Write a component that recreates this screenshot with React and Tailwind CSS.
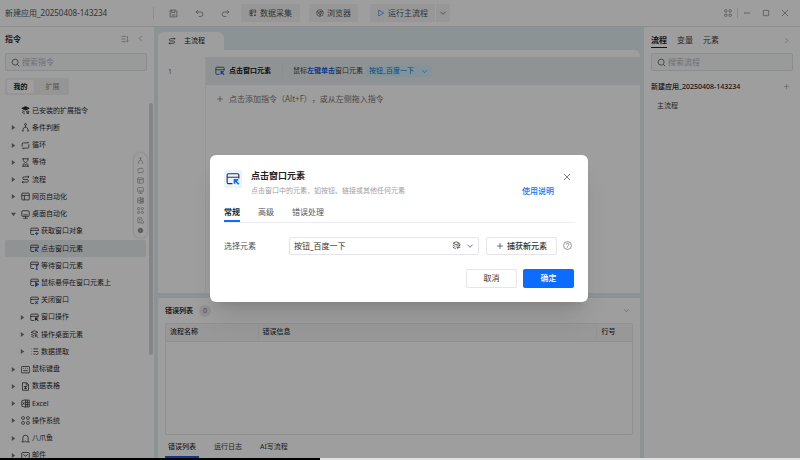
import React, { useState } from 'react';

const paths = {
  save: <><path d="M3 3h15l3 3v15H3z" /><path d="M7 3v6h9V3M7 16h10" /></>,
  undo: <path d="M8 3 3 8l5 5M3 8h12a6 6 0 0 1 0 12h-5" />,
  redo: <path d="m16 3 5 5-5 5M21 8H9a6 6 0 0 0 0 12h5" />,
  collect: <><path d="M12 20H3V3h17v9M3 9h17M3 14h9M8 3v17" /><path d="M18 14v7m-3-3 3 3 3-3" /></>,
  browser: <><circle cx="12" cy="12" r="10" /><circle cx="12" cy="12" r="4" /><path d="M12 8h9M8.5 14 4 6M15.5 14 11 22" /></>,
  play: <path d="M5 3v18l15-9z" />,
  down: <path d="m4 8 8 8 8-8" />,
  left: <path d="m15 4-7 8 7 8" />,
  right: <path d="m9 4 7 8-7 8" />,
  close: <path d="m3 3 18 18M21 3 3 21" />,
  minus: <path d="M3 12h18" />,
  square: <rect x="4" y="4" width="16" height="16" rx="2" />,
  plus: <path d="M12 3v18M3 12h18" />,
  sort: <path d="M2 4h12M2 12h10M2 20h12M19 3v17m-3-3 3 3 3-3" />,
  search: <><circle cx="11" cy="11" r="8" /><path d="m17 17 5 5" /></>,
  grid: (
    <>
      <rect x="2" y="2" width="7" height="7" rx="2" />
      <rect x="15" y="2" width="7" height="7" rx="2" />
      <rect x="2" y="15" width="7" height="7" rx="2" />
      <rect x="15" y="15" width="7" height="7" rx="2" />
    </>
  ),
  installed: (
    <>
      <path d="M12 1 2 6l10 5 10-5z" fill="currentColor" />
      <path d="M3 12l7 4M3 17l7 4M15 14h6v3h-6zM15 20h6" />
    </>
  ),
  branch: (
    <>
      <circle cx="12" cy="4" r="2.5" />
      <path d="M12 7v5M12 11c-5 1-7 4-7 8M12 11c5 1 7 4 7 8M2 21h6M16 21h6" />
    </>
  ),
  loop: <path d="M3 15V8a3 3 0 0 1 3-3h14l-3-3M21 9v7a3 3 0 0 1-3 3H4l3 3" />,
  wait: <path d="M3 2h18M3 22h18M6 2v5l5 5-5 5v5M18 2v5l-5 5 5 5v5M9 18h6" />,
  flow: <path d="M21 5H8a3.5 3.5 0 0 0 0 7h8a3.5 3.5 0 0 1 0 7H3M18 2l3 3-3 3M6 16l-3 3 3 3" />,
  web: <><rect x="2" y="3" width="20" height="18" rx="2" /><path d="M2 9h20M9 9v12" /></>,
  desktop: <><rect x="2" y="2" width="20" height="15" rx="3" /><path d="M12 17v4M6 22h12M6 13h12" /></>,
  keyboard: <><rect x="1" y="4" width="22" height="17" rx="2" /><path d="M6 9h2M11 9h2M16 9h2M6 15h12" /></>,
  sheet: <><path d="M4 2h11l5 5v15H4zM14 2v6h6" /><path d="M8 12h8M8 17h8M12 12v7" /></>,
  excel: <><path d="M12 3h10v18H12M12 9h10M12 15h10M17 3v18" /><path d="M2 5l10-3v20L2 19zM5 9l4 6M9 9l-4 6" /></>,
  bell: <path d="M5 18V10a7 7 0 0 1 14 0v8l3 3h-7l-3-2-3 2H2z" />,
  mail: <><rect x="2" y="4" width="20" height="17" rx="2" /><path d="m6 9 6 5 6-5" /></>,
  layers: (
    <>
      <path d="M12 2 3 6l9 4 9-4zM3 11l7 4M3 16l7 4" />
      <path d="m14 13 8 8M14 19v-6h6" />
    </>
  ),
  extract: <path d="M9 5h13M9 12h13M9 19h5M3 5h1M3 12h1M3 19h1M15 18l3 3 5-6" />,
  shape: <><path d="M10 20H3V3h14v6M7 8h6M7 13h3" /><path d="M13 15l5-4 4 4v6h-9z" /></>,
  library: <><path d="M11 2 3 6l8 4 9-4zM2 11l7 4M2 16l8 5" /><path d="M12 13h9l-3-3M22 17h-9l3 4M21 8v4" /></>,
  help: <><circle cx="12" cy="12" r="10.5" /><path d="M8.5 9.5a3.5 3.5 0 1 1 5 3c-1 .5-1.5 1-1.5 2.5M12 17v1.5" /></>,
  dot: <><circle cx="12" cy="12" r="8" fill="currentColor" /><circle cx="12" cy="12" r="2" stroke="#ddd" /></>,
};

// small blue mark in the lower right corner of the window icon
const marks = {
  add: <path d="M18 13v9M13.5 17.5h9" />,
  click: <path d="m15 14 7 7M14.5 20v-6.5H21" />,
  wait: <path d="M15 12h6M15 22h6M18 12v10" />,
  hover: <path d="M15 12v10l7-5z" fill="currentColor" />,
  close: <path d="m14 14 7 7M21 14l-7 7" />,
};

function Icon({ name, className = 'size-2' }) {
  return (
    <svg viewBox="0 0 24 24" fill="none" stroke="currentColor" strokeWidth="2" className={`shrink-0 ${className}`}>
      {paths[name]}
    </svg>
  );
}

function WindowIcon({ mark, dark, className = 'size-[9px]' }) {
  return (
    <svg viewBox="0 0 24 24" fill="none" stroke="currentColor" strokeWidth="2" className={`shrink-0 ${className}`}>
      <path d="M11 20H4a2 2 0 0 1-2-2V5a2 2 0 0 1 2-2h16a2 2 0 0 1 2 2v6M2 9h20" />
      <g className={dark ? '' : 'text-[#0b6cff]'} stroke="currentColor" strokeWidth="2.8">{marks[mark]}</g>
    </svg>
  );
}

const tree = [
  { label: '已安装的扩展指令', icon: 'installed' },
  { label: '条件判断', icon: 'branch', caret: true },
  { label: '循环', icon: 'loop', caret: true },
  { label: '等待', icon: 'wait', caret: true },
  { label: '流程', icon: 'flow', caret: true },
  { label: '网页自动化', icon: 'web', caret: true },
  { label: '桌面自动化', icon: 'desktop', caret: true, open: true },
  { label: '获取窗口对象', mark: 'add', child: true },
  { label: '点击窗口元素', mark: 'click', child: true, active: true },
  { label: '等待窗口元素', mark: 'wait', child: true },
  { label: '鼠标悬停在窗口元素上', mark: 'hover', child: true },
  { label: '关闭窗口', mark: 'close', child: true },
  { label: '窗口操作', mark: 'click', dark: true, child: true, caret: true },
  { label: '操作桌面元素', icon: 'layers', child: true, caret: true },
  { label: '数据提取', icon: 'extract', child: true, caret: true },
  { label: '鼠标键盘', icon: 'keyboard', caret: true },
  { label: '数据表格', icon: 'sheet', caret: true },
  { label: 'Excel', icon: 'excel', caret: true },
  { label: '操作系统', icon: 'grid', caret: true },
  { label: '八爪鱼', icon: 'bell', caret: true },
  { label: '邮件', icon: 'mail', caret: true },
];

const shortcuts = ['branch', 'loop', 'web', 'desktop', 'excel', 'grid', 'shape', 'dot'];

function TopBar() {
  return (
    <header className="flex h-[27px] shrink-0 items-center border-b border-[#e4e4e6] text-[#555]">
      <div className="w-[154px] shrink-0 border-r border-[#e4e4e6] pl-[5px]">新建应用_20250408-143234</div>
      <div className="flex items-center gap-[17px] pr-[11px] pl-[15px] text-[#777]">
        <button aria-label="保存"><Icon name="save" className="size-[9px]" /></button>
        <button aria-label="撤销"><Icon name="undo" className="size-[9px]" /></button>
        <button aria-label="重做"><Icon name="redo" className="size-[9px]" /></button>
      </div>
      <div className="flex h-[18px] gap-[9px]">
        <button className="flex items-center gap-[3px] rounded-xs bg-[#f4f4f5] px-2"><Icon name="collect" />数据采集</button>
        <button className="flex items-center gap-[3px] rounded-xs bg-[#f4f4f5] px-[7px]"><Icon name="browser" />浏览器</button>
        <div className="ml-[3px] flex gap-px">
          <button className="flex items-center gap-[3px] rounded-l-xs bg-[#f4f4f5] px-[7px]">
            <Icon name="play" className="size-2 text-[#2b7de9]" />运行主流程
          </button>
          <button aria-label="更多运行方式" className="rounded-r-xs bg-[#f4f4f5] px-[3px]"><Icon name="down" /></button>
        </div>
      </div>
      <div className="ml-auto flex items-center gap-[11px] pr-[11px] text-[#777]">
        <button aria-label="应用" className="-mr-[6px]"><Icon name="grid" /></button>
        <span className="-mr-[6px] h-[10px] w-px bg-[#ddd]" />
        <button aria-label="最小化"><Icon name="minus" /></button>
        <button aria-label="最大化"><Icon name="square" /></button>
        <button aria-label="关闭"><Icon name="close" /></button>
      </div>
    </header>
  );
}

function SearchBox({ placeholder }) {
  return (
    <label className="flex h-[18px] items-center gap-[2px] rounded-xs border border-[#e2e4e6] bg-[#f7f8f8] px-[5px] text-[#555]">
      <Icon name="search" className="size-[9px]" />
      <input aria-label={placeholder} placeholder={placeholder} className="min-w-0 flex-1 outline-none placeholder:text-[#b5b5b8]" />
    </label>
  );
}

function Sidebar() {
  return (
    <aside className="relative w-[154px] shrink-0 overflow-hidden bg-white">
      <div className="flex h-[26px] items-center gap-2 px-[5px] pb-[3px]">
        <h2 className="mr-auto font-bold text-[#333]">指令</h2>
        <button aria-label="排序" className="text-[#888]"><Icon name="sort" /></button>
        <button aria-label="收起" className="mr-[5px] text-[#888]"><Icon name="left" className="size-[7px]" /></button>
      </div>
      <div className="pr-[7px] pl-[5px]">
        <SearchBox placeholder="搜索指令" />
        <div className="mt-[7px] flex h-[17px] w-[64px] rounded-xs bg-[#f1f1f2] p-[2px] text-[7px]">
          <button className="w-[27px] rounded-xs bg-white font-bold text-[#222]">我的</button>
          <button className="flex-1 pl-[4px] text-[#888]">扩展</button>
        </div>
      </div>
      <ul className="mt-[7px] grid h-[362px] auto-rows-fr pr-2 pl-[5px] text-[7px] text-[#2c2c2e]">
        {tree.map((item) => (
          <li
            key={item.label}
            className={`flex items-center ${item.child ? 'pl-[15px]' : 'pl-[6px]'} ${item.active ? 'rounded-xs bg-[#e8eeef]' : ''}`}
          >
            <span className="w-[10px] shrink-0">
              {item.caret && (
                <svg viewBox="0 0 6 6" className={`size-[5px] text-[#777] ${item.open ? 'rotate-90' : ''}`}>
                  <path d="M1 0v6l4-3z" fill="currentColor" />
                </svg>
              )}
            </span>
            {item.icon
              ? <Icon name={item.icon} className="size-[9px]" />
              : <WindowIcon mark={item.mark} dark={item.dark} />}
            <span className="ml-[2px] whitespace-nowrap">{item.label}</span>
          </li>
        ))}
      </ul>
      <div className="absolute top-[126px] right-[7px] flex w-[13px] flex-col items-center gap-[3px] rounded-full bg-white py-[4px] text-[#888] shadow-[0_0_3px_#ccc]">
        {shortcuts.map((name) => (
          <button key={name} aria-label={name}><Icon name={name} className="size-[7px]" /></button>
        ))}
      </div>
      <div className="absolute top-[76px] right-px h-[252px] w-[4px] rounded-full bg-[#d3d7da]" />
    </aside>
  );
}

function Editor() {
  return (
    <section className="flex h-[266px] shrink-0 flex-col">
      <div className="mt-[5px] flex h-[18px] w-[66px] items-center gap-2 rounded-t-md bg-white px-[10px] text-[7px] text-[#222]">
        <Icon name="flow" />主流程
      </div>
      <div className="flex flex-1 rounded-tr-md bg-white pt-[7px]">
        <div className="w-[48px] shrink-0 border-r border-[#f2f2f2] pt-[9px] pl-[10px] text-[7px] text-[#777]">1</div>
        <div className="min-w-0 flex-1">
          <div className="flex h-[28px] items-center bg-[#e9eeef] pl-[9px] text-[7px] text-[#444]">
            <WindowIcon mark="click" className="size-[10px]" />
            <b className="ml-[4px] w-[54px] border-r border-[#e2e6e7] text-[#111]">点击窗口元素</b>
            <span className="ml-[10px]">
              鼠标<a href="#click" className="font-bold text-[#0b5fe0]">左键单击</a>窗口元素
            </span>
            <button className="ml-[2px] flex h-[12px] items-center gap-[7px] rounded-xs bg-[#d6edf8] px-[4px] text-[#0878c8]">
              按钮_百度一下<Icon name="down" className="size-[7px]" />
            </button>
          </div>
          <button className="flex h-[28px] items-center gap-[5px] pl-[10px] text-[#777] [text-spacing-trim:space-all]">
            <Icon name="plus" />点击添加指令（Alt+F），或从左侧拖入指令
          </button>
        </div>
      </div>
    </section>
  );
}

function ErrorPanel() {
  return (
    <section className="mt-[5px] flex min-h-0 flex-1 flex-col bg-white px-[7px] pb-[2px] text-[7px] text-[#333]">
      <div className="flex h-[25px] items-center">
        <h2 className="font-bold">错误列表</h2>
        <span className="ml-[6px] flex size-[12px] items-center justify-center rounded-full bg-[#ebebec] text-[#777]">0</span>
        <button aria-label="收起" className="mr-[3px] ml-auto text-[#888]"><Icon name="down" className="size-[7px]" /></button>
      </div>
      <div className="min-h-0 flex-1 rounded-xs border border-[#eaebec]">
        <table className="w-full table-fixed text-left">
          <thead>
            <tr className="h-[17px] border-b border-[#eaebec] bg-[#f6f6f7]">
              <th className="w-[92px] border-r border-[#eeeeef] pl-[4px] font-medium">流程名称</th>
              <th className="border-r border-[#eeeeef] pl-[4px] font-medium">错误信息</th>
              <th className="w-[36px] pl-[5px] font-medium">行号</th>
            </tr>
          </thead>
          <tbody />
        </table>
      </div>
      <nav className="flex h-[23px] shrink-0 gap-[11px] pt-[2px]">
        <button className="border-b-2 border-[#1a5fe0] px-[3px] font-medium">错误列表</button>
        <button className="border-b-2 border-transparent px-[4px]">运行日志</button>
        <button className="border-b-2 border-transparent px-[3px]">AI写流程</button>
      </nav>
    </section>
  );
}

function FlowPanel() {
  return (
    <aside className="w-[156px] shrink-0 bg-white px-[7px] text-[#444]">
      <div className="flex h-[26px] items-start gap-[10px] pt-[5px]">
        <button className="h-[16px] border-b border-[#222] font-bold text-[#222]">流程</button>
        <button className="h-[16px]">变量</button>
        <button className="h-[16px]">元素</button>
        <button aria-label="展开" className="mt-[5px] mr-[3px] ml-auto text-[#888]"><Icon name="right" className="size-[7px]" /></button>
      </div>
      <SearchBox placeholder="搜索流程" />
      <div className="mt-[6px] flex h-[19px] items-center justify-between pr-[3px] text-[7px] font-medium text-[#222]">
        新建应用_20250408-143234
        <button aria-label="新建流程" className="text-[#999]"><Icon name="plus" className="size-[7px]" /></button>
      </div>
      <div className="flex h-[20px] items-center pl-[6px] text-[7px]">主流程</div>
    </aside>
  );
}

function ClickDialog() {
  const [tab, setTab] = useState('常规');

  return (
    <div role="dialog" aria-label="点击窗口元素" className="w-[378px] rounded-md bg-white p-[14px] shadow-xl">
      <div className="flex h-[35px] items-start">
        <div className="mt-px flex size-[18px] items-center justify-center rounded-xs bg-[#eaf3ff] text-[#334]">
          <WindowIcon mark="click" className="size-[14px]" />
        </div>
        <div className="ml-[9px]">
          <h1 className="text-[9px] leading-[14px] font-bold text-[#222]">点击窗口元素</h1>
          <p className="text-[7px] leading-[16px] text-[#a0a0a4]">点击窗口中的元素，如按钮、链接或其他任何元素</p>
        </div>
        <a href="#help" className="mt-[14px] ml-auto leading-[16px] font-medium text-[#1473f5]">使用说明</a>
        <button aria-label="关闭" className="mt-[4px] mr-[3px] ml-[9px] text-[#444]"><Icon name="close" /></button>
      </div>

      <nav className="flex h-[19px] gap-[18px] border-b border-[#ededef] text-[#555]">
        {['常规', '高级', '错误处理'].map((name) => (
          <button
            key={name}
            onClick={() => setTab(name)}
            className={`border-b-2 ${tab === name ? 'border-[#0b6cff] font-bold text-[#222]' : 'border-transparent'}`}
          >
            {name}
          </button>
        ))}
      </nav>

      <div className="mt-[14px] flex h-[18px] items-center text-[#333]">
        <label htmlFor="element" className="w-[65px] text-[#555]">选择元素</label>
        <div className="relative h-full w-[190px]">
          <select id="element" className="h-full w-full appearance-none rounded-xs border border-[#e6e6ea] pl-[4px] outline-none">
            <option>按钮_百度一下</option>
          </select>
          <span className="pointer-events-none absolute inset-y-0 right-[5px] flex items-center gap-[5px]">
            <Icon name="library" className="size-[9px]" />
            <Icon name="down" />
          </span>
        </div>
        <button className="ml-[7px] flex h-full w-[71px] items-center justify-center gap-[3px] rounded-xs border border-[#e6e6ea] font-medium">
          <Icon name="plus" />捕获新元素
        </button>
        <button aria-label="帮助" className="ml-[6px] text-[#777]"><Icon name="help" className="size-[9px]" /></button>
      </div>

      <div className="mt-[14px] flex h-[19px] justify-end gap-[6px]">
        <button className="w-[51px] rounded-xs border border-[#e6e6ea] text-[#333]">取消</button>
        <button className="w-[51px] rounded-xs bg-[#0b6cff] font-medium text-white">确定</button>
      </div>
    </div>
  );
}

export default function App() {
  return (
    <div className="relative flex h-screen flex-col overflow-hidden bg-white font-['Noto_Sans','Noto_Sans_CJK_SC',sans-serif] text-[8px] leading-[12px]">
      <TopBar />
      <div className="flex min-h-0 flex-1 bg-[#e3edf0]">
        <Sidebar />
        <main className="mx-[4px] flex min-w-0 flex-1 flex-col">
          <Editor />
          <ErrorPanel />
        </main>
        <FlowPanel />
      </div>

      <div className="absolute inset-0 flex items-center justify-center bg-black/38 pr-[2px] pb-[4px]">
        <ClickDialog />
      </div>

      {/* playback progress */}
      <div className="absolute inset-x-0 bottom-0 h-[2px] bg-[#e2e2e2]">
        <div className="h-full w-2/5 bg-black" />
      </div>
    </div>
  );
}
